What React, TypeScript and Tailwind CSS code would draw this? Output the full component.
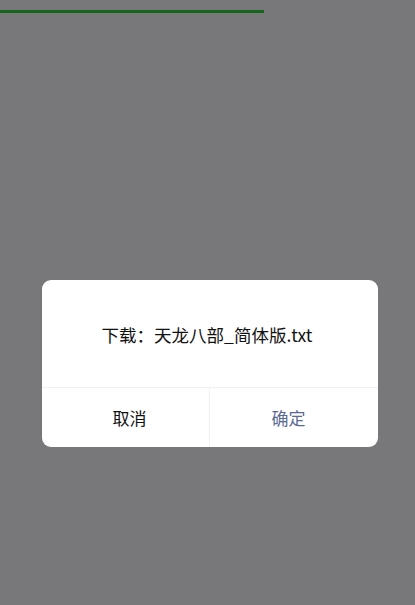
import React from 'react';

const App: React.FC = () => {
    return (
        <div
            className="relative w-full h-[605px] bg-[#787779] overflow-hidden"
            style={{ fontFamily: '"Noto Sans CJK SC", "Liberation Sans", sans-serif' }}
        >
            {/* 进度条 */}
            <div className="pt-[10px]">
                <div className="h-[3px] w-[264px] bg-[#13661a]" />
            </div>

            {/* 下载确认弹窗 */}
            <div className="mx-[42px] mt-[267px] w-[336px] rounded-[9px] bg-white overflow-hidden">
                <div className="h-[107px] flex items-center justify-center pt-[3px] pr-[6px] text-[17.5px] text-[#111111]">
                    下载：天龙八部_简体版.txt
                </div>
                <div className="grid grid-cols-2 h-[60px] border-t border-[#f1f1f1]">
                    <button className="flex items-center justify-center pl-[8px] text-[17px] text-[#111111] border-r border-[#f1f1f1]">
                        取消
                    </button>
                    <button className="flex items-center justify-center pr-[11px] text-[17px] text-[#5b6a92]">
                        确定
                    </button>
                </div>
            </div>
        </div>
    );
};

export default App;
